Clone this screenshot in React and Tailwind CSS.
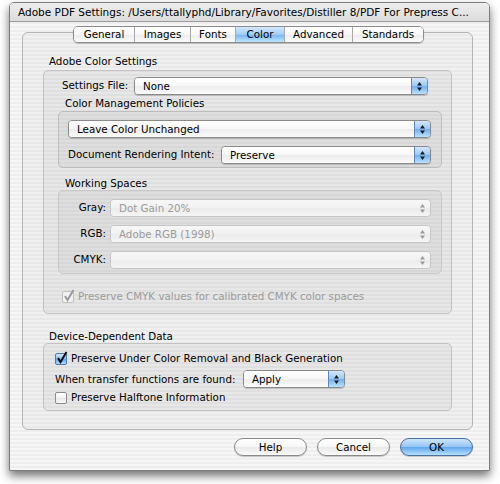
import React from 'react'

const stripes =
  'bg-[repeating-linear-gradient(180deg,#eeeeee_0px,#eeeeee_2px,#f6f6f6_2px,#f6f6f6_4px)]'

function Arrows({ disabled }) {
  const c = disabled ? '#9a9a9a' : '#1a1a1a'
  return (
    <svg width="7" height="11" viewBox="0 0 7 11">
      <path d="M3.5 1 L6 4.5 L1 4.5 Z" fill={c} />
      <path d="M3.5 10 L6 6.5 L1 6.5 Z" fill={c} />
    </svg>
  )
}

function Popup({ value, disabled, className = '' }) {
  return (
    <div
      className={`flex h-[18px] overflow-hidden rounded-[4px] border ${
        disabled
          ? 'border-[#c6c6c6] text-[#9b9b9b]'
          : 'border-[#8a8a8a] text-black shadow-[0_1px_1px_rgba(0,0,0,0.18)]'
      } ${className}`}
    >
      <div
        className={`flex-1 truncate pl-[8px] leading-[16px] ${
          disabled
            ? 'bg-[linear-gradient(#f7f7f7,#f1f1f1_50%,#ebebeb_51%,#f5f5f5)]'
            : 'bg-[linear-gradient(#ffffff,#f7f7f7_50%,#ececec_51%,#fbfbfb)]'
        }`}
      >
        {value}
      </div>
      <div
        className={`flex w-[16px] items-center justify-center ${
          disabled
            ? 'bg-[linear-gradient(#f7f7f7,#f1f1f1_50%,#ebebeb_51%,#f5f5f5)]'
            : 'border-l border-[#5b87c4] bg-[linear-gradient(#d3e7fb,#9cc8f3_50%,#6faeee_51%,#b9e2ff)]'
        }`}
      >
        <Arrows disabled={disabled} />
      </div>
    </div>
  )
}

function Checkbox({ checked, disabled }) {
  return (
    <div className="relative h-[12px] w-[12px] shrink-0">
      <div
        className={`h-[12px] w-[12px] rounded-[2px] border ${
          disabled
            ? 'border-[#c0c0c0] bg-[#f2f2f2]'
            : checked
              ? 'border-[#4f76ad] bg-[linear-gradient(#cfe5fb,#8cbef1_50%,#5ea4ec_51%,#b0dcff)]'
              : 'border-[#8a8a8a] bg-[linear-gradient(#ffffff,#f2f2f2_50%,#e6e6e6_51%,#fafafa)]'
        }`}
      />
      {checked && (
        <svg
          className="absolute left-[1px] top-[-2px]"
          width="12"
          height="13"
          viewBox="0 0 12 13"
        >
          <path
            d="M2 7 L4.5 11 L10.5 1"
            fill="none"
            stroke={disabled ? '#9a9a9a' : '#111'}
            strokeWidth="2"
          />
        </svg>
      )}
    </div>
  )
}

function Button({ children, primary }) {
  return (
    <div
      className={`flex h-[18px] w-[73px] items-center justify-center rounded-full border leading-[16px] shadow-[0_1px_1px_rgba(0,0,0,0.2)] ${
        primary
          ? 'border-[#4a6ea8] bg-[linear-gradient(#cde5fb,#93c4f3_50%,#5fa5ec_51%,#b6e1ff)]'
          : 'border-[#8a8a8a] bg-[linear-gradient(#ffffff,#f6f6f6_50%,#e8e8e8_51%,#fbfbfb)]'
      }`}
    >
      {children}
    </div>
  )
}

const tabs = [
  ['General', 'w-[60px]'],
  ['Images', 'w-[56px]'],
  ['Fonts', 'w-[45px]'],
  ['Color', 'w-[49px]'],
  ['Advanced', 'w-[68px]'],
  ['Standards', 'w-[71px]'],
]

function Tabs() {
  return (
    <div className="relative z-10 mb-[-11px] flex justify-center pl-[2px]">
      <div className="flex h-[17px] overflow-hidden rounded-[5px] border border-[#8c8c8c] shadow-[0_1px_1px_rgba(0,0,0,0.2)]">
        {tabs.map(([name, w], i) => (
          <div
            key={name}
            className={`${w} flex items-center justify-center leading-[15px] ${
              i > 0 ? 'border-l border-[#a8a8a8]' : ''
            } ${
              name === 'Color'
                ? 'bg-[linear-gradient(#d3e8fc,#a1cdf5_50%,#74b4f0_51%,#bde4ff)]'
                : 'bg-[linear-gradient(#ffffff,#f7f7f7_50%,#ececec_51%,#fbfbfb)]'
            }`}
          >
            {name}
          </div>
        ))}
      </div>
    </div>
  )
}

export default function App() {
  return (
    <div className="h-[484px] w-[500px] bg-white pl-[9px] pt-[2px] font-['DejaVu_Sans',sans-serif] text-[10.3px] text-black">
      <div className="flex h-[469px] w-[481px] flex-col overflow-hidden rounded-t-[5px] border border-[#7d7d7d] shadow-[0_5px_10px_rgba(0,0,0,0.55)]">
        <div className="h-[19px] shrink-0 overflow-hidden whitespace-nowrap border-b border-[#9a9a9a] bg-[linear-gradient(#ededed,#dcdcdc)] pl-[8px] text-[10.5px] leading-[19px]">
          Adobe PDF Settings: /Users/ttallyphd/Library/Favorites/Distiller 8/PDF For Prepress C...
        </div>

        <div className={`flex flex-1 flex-col pl-[12px] pr-[16px] pt-[4px] ${stripes}`}>
          <Tabs />

          <div className="flex flex-col rounded-[6px] border border-[#b4b4b4] bg-[rgba(0,0,0,0.025)] px-[20px] pb-[18px] pt-[22px]">
            <div className="h-[13px] pl-[6px] leading-[13px]">Adobe Color Settings</div>
            <div className="mt-[2px] flex flex-col rounded-[5px] border border-[#c2c2c2] bg-[rgba(0,0,0,0.035)] pb-[10px] pt-[6px]">
              <div className="flex items-center pl-[18px] pr-[23px]">
                <div className="w-[72px] shrink-0">Settings File:</div>
                <Popup value="None" className="flex-1" />
              </div>

              <div className="mt-[2px] h-[13px] pl-[21px] leading-[13px]">Color Management Policies</div>
              <div className="ml-[14px] mr-[9px] mt-[1px] flex flex-col gap-[8px] rounded-[5px] border border-[#bdbdbd] bg-[rgba(0,0,0,0.035)] pb-[3px] pl-[9px] pr-[10px] pt-[8px]">
                <Popup value="Leave Color Unchanged" />
                <div className="flex items-center">
                  <div className="w-[153px] shrink-0">Document Rendering Intent:</div>
                  <Popup value="Preserve" className="flex-1" />
                </div>
              </div>

              <div className="mt-[9px] h-[13px] pl-[21px] leading-[13px]">Working Spaces</div>
              <div className="ml-[14px] mr-[9px] flex flex-col gap-[8px] rounded-[5px] border border-[#c8c8c8] bg-[rgba(0,0,0,0.035)] pb-[4px] pl-[9px] pr-[10px] pt-[8px]">
                {[
                  ['Gray:', 'Dot Gain 20%'],
                  ['RGB:', 'Adobe RGB (1998)'],
                  ['CMYK:', ''],
                ].map(([label, value]) => (
                  <div key={label} className="flex items-center gap-[4px]">
                    <div className="w-[38px] shrink-0 text-right">{label}</div>
                    <Popup value={value} disabled className="flex-1" />
                  </div>
                ))}
              </div>

              <div className="mt-[16px] flex h-[13px] items-center gap-[4px] pl-[18px] text-[#9b9b9b]">
                <Checkbox checked disabled />
                <span className="leading-[13px]">Preserve CMYK values for calibrated CMYK color spaces</span>
              </div>
            </div>

            <div className="mt-[16px] h-[13px] pl-[6px] leading-[13px]">Device-Dependent Data</div>
            <div className="flex flex-col rounded-[5px] border border-[#c2c2c2] bg-[rgba(0,0,0,0.035)] pb-[6px] pl-[11px] pt-[8px]">
              <div className="flex h-[13px] items-center gap-[4px]">
                <Checkbox checked />
                <span className="leading-[13px]">Preserve Under Color Removal and Black Generation</span>
              </div>
              <div className="mt-[5px] flex items-center">
                <div className="w-[188px] shrink-0 leading-[13px]">When transfer functions are found:</div>
                <Popup value="Apply" className="w-[102px]" />
              </div>
              <div className="mt-[3px] flex h-[13px] items-center gap-[4px]">
                <Checkbox />
                <span className="leading-[13px]">Preserve Halftone Information</span>
              </div>
            </div>
          </div>

          <div className="mt-[8px] flex justify-end gap-[10px]">
            <Button>Help</Button>
            <Button>Cancel</Button>
            <Button primary>OK</Button>
          </div>
        </div>
      </div>
    </div>
  )
}
